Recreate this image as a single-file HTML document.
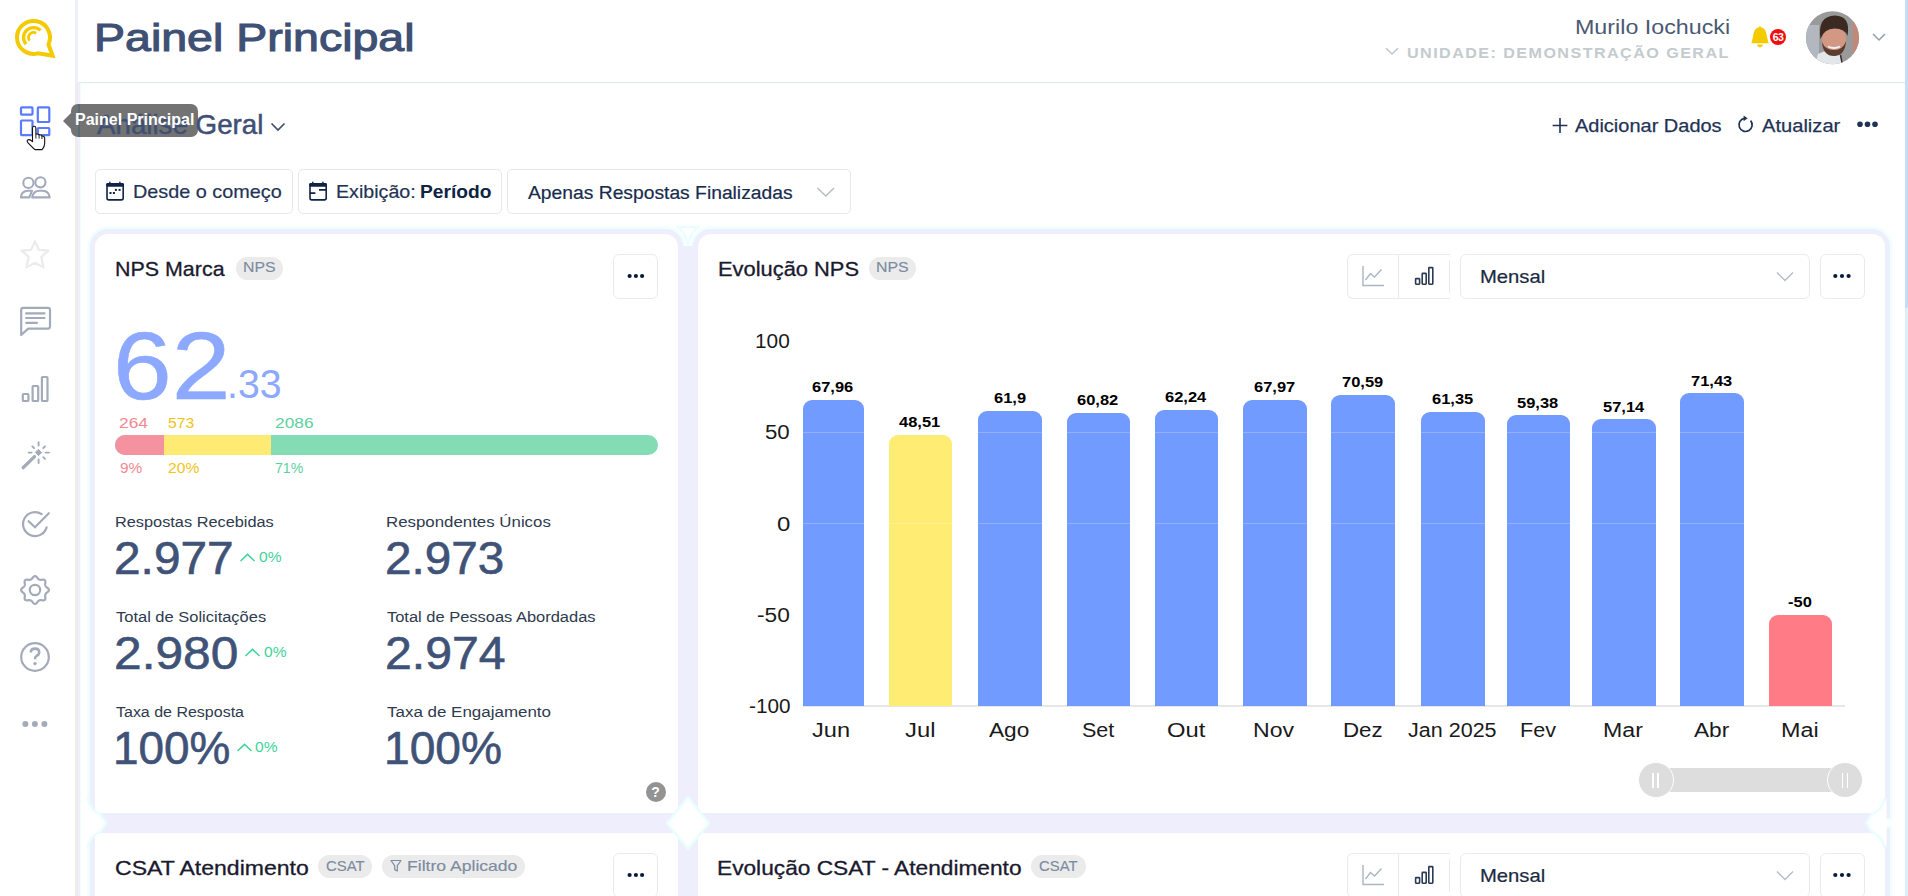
<!DOCTYPE html>
<html><head><meta charset="utf-8"><title>Painel Principal</title>
<style>
html,body{margin:0;padding:0;width:1908px;height:896px;overflow:hidden;background:#fff}
body{position:relative;font-family:"Liberation Sans",sans-serif}
.t{position:absolute;white-space:nowrap;line-height:1;transform-origin:0 0}
.r{position:absolute;box-sizing:border-box}
.s{position:absolute;overflow:visible}
</style></head><body>
<div class="r" style="left:1905px;top:0px;width:3px;height:896px;background:#DDEEF8"></div>
<div class="r" style="left:1905px;top:0px;width:3px;height:308px;background:#C4DCF6;border-radius:0 0 2px 2px"></div>
<div class="r" style="left:75px;top:0px;width:3px;height:83px;background:#EEEEFC"></div>
<div class="r" style="left:75px;top:83px;width:3px;height:813px;background:#EDEDED"></div>
<div class="r" style="left:78px;top:83px;width:2px;height:813px;background:#EEEEFC"></div>
<div class="r" style="left:80px;top:83px;width:1px;height:813px;background:#F0FEFE"></div>
<div class="r" style="left:78px;top:82px;width:1827px;height:1px;background:#E3EAEE"></div>
<div class="r" style="left:81px;top:83px;width:1824px;height:1px;background:#F2FEFE"></div>
<svg class="s" style="left:0px;top:0px" width="80" height="80" viewBox="0 0 80 80"><g fill="none" stroke="#F3CB00">
<path d="M37.8 53.4 A16.5 16.5 0 1 1 48.45 44.47 L52.6 55.8 Z" stroke-width="4" stroke-linejoin="miter" stroke-miterlimit="10"/>
<path d="M26.07 44.19 A10 10 0 0 1 40.57 30.43" stroke-width="3.3"/>
<path d="M29.67 40.71 A5 5 0 0 1 36.15 33.26" stroke-width="2.8"/>
</g></svg>
<svg class="s" style="left:18px;top:104px" width="34" height="34" viewBox="0 0 34 34"><g fill="none" stroke="#5B7BFF" stroke-width="2.2">
<rect x="3" y="3.4" width="11.5" height="7.2" rx="0.8"/>
<rect x="19.8" y="3.4" width="11.5" height="14.6" rx="0.8"/>
<rect x="3" y="16.5" width="11.5" height="14.6" rx="0.8"/>
<rect x="19.8" y="24" width="11.5" height="7.2" rx="0.8"/>
</g></svg>
<svg class="s" style="left:18px;top:174px" width="34" height="28" viewBox="0 0 34 28"><g fill="none" stroke="#A3ABBB" stroke-width="2.1" stroke-linejoin="round">
<circle cx="10.4" cy="8.9" r="5.1"/>
<circle cx="22.4" cy="8.3" r="5.1"/>
<path d="M2.9 23.4 Q3.4 17 10 16.8 H14 L11.4 23.4 Z"/>
<path d="M14.2 23.4 Q15.3 16.8 21.6 16.8 H24.6 Q30.9 17 31.7 23.4 Z"/>
</g></svg>
<svg class="s" style="left:18px;top:238px" width="34" height="34" viewBox="0 0 34 34"><path d="M17 3.2 L20.9 11.9 L30.4 12.6 L23.3 18.9 L25.6 29.4 L17 24.8 L8.4 29.4 L10.7 18.9 L3.6 12.6 L13.1 11.9 Z" fill="none" stroke="#EBEBEB" stroke-width="2.2" stroke-linejoin="round"/></svg>
<svg class="s" style="left:18px;top:304px" width="34" height="34" viewBox="0 0 34 34"><g fill="none" stroke="#A3ABBB" stroke-width="2.2" stroke-linejoin="round">
<path d="M3.2 31 V5.8 Q3.2 3.8 5.2 3.8 H30 Q32 3.8 32 5.8 V22.6 Q32 24.6 30 24.6 H10.2 Z"/>
<path d="M8.2 9.4 H26.5 M8.2 14 H26.5 M8.2 18.8 H19" stroke-linecap="round"/>
</g></svg>
<svg class="s" style="left:18px;top:372px" width="34" height="34" viewBox="0 0 34 34"><g fill="none" stroke="#A3ABBB" stroke-width="2.2">
<rect x="4.8" y="22" width="5.6" height="7" rx="0.8"/>
<rect x="14.6" y="14" width="5.6" height="15" rx="0.8"/>
<rect x="23.9" y="5" width="5.6" height="24" rx="0.8"/>
</g></svg>
<svg class="s" style="left:18px;top:438px" width="34" height="34" viewBox="0 0 34 34"><g fill="none" stroke="#A3ABBB" stroke-linecap="round">
<path d="M5.2 29.6 L16.5 18.6" stroke-width="3.4"/>
<path d="M20.6 11.6 L23.6 14.6 L20.6 17.6 L17.6 14.6 Z" fill="#A3ABBB" stroke-width="1"/>
<path d="M20.6 4.2 V7.6 M20.6 21.4 V25 M10.6 14.6 H13.6 M27.6 14.6 H31 M14.3 8.3 L16 10 M27 8.3 L25.3 10 M25.3 19.2 L27 20.9" stroke-width="1.9"/>
</g></svg>
<svg class="s" style="left:18px;top:506px" width="34" height="34" viewBox="0 0 34 34"><g fill="none" stroke="#A3ABBB" stroke-width="2.2" stroke-linecap="round">
<path d="M28.6 21.4 A12 12 0 1 1 23.7 8.1"/>
<path d="M10.6 15.2 L17 21.3 L30.8 7.2"/>
</g></svg>
<svg class="s" style="left:18px;top:573px" width="34" height="34" viewBox="0 0 34 34"><g fill="none" stroke="#A3ABBB" stroke-width="2.2" stroke-linejoin="round">
<path d="M30.90 17.00 L30.84 17.45 L30.65 17.89 L30.35 18.32 L29.98 18.71 L29.55 19.07 L29.12 19.41 L28.70 19.73 L28.33 20.04 L28.02 20.34 L27.77 20.66 L27.59 20.99 L27.44 21.32 L27.30 21.67 L27.20 22.03 L27.15 22.43 L27.16 22.86 L27.20 23.34 L27.27 23.86 L27.34 24.41 L27.38 24.97 L27.37 25.51 L27.28 26.02 L27.10 26.46 L26.83 26.83 L26.46 27.10 L26.02 27.28 L25.51 27.37 L24.97 27.38 L24.41 27.34 L23.86 27.27 L23.34 27.20 L22.86 27.16 L22.43 27.15 L22.03 27.20 L21.67 27.30 L21.32 27.44 L20.99 27.59 L20.66 27.77 L20.34 28.02 L20.04 28.33 L19.73 28.70 L19.41 29.12 L19.07 29.55 L18.71 29.98 L18.32 30.35 L17.89 30.65 L17.45 30.84 L17.00 30.90 L16.55 30.84 L16.11 30.65 L15.68 30.35 L15.29 29.98 L14.93 29.55 L14.59 29.12 L14.27 28.70 L13.96 28.33 L13.66 28.02 L13.34 27.77 L13.01 27.59 L12.68 27.44 L12.33 27.30 L11.97 27.20 L11.57 27.15 L11.14 27.16 L10.66 27.20 L10.14 27.27 L9.59 27.34 L9.03 27.38 L8.49 27.37 L7.98 27.28 L7.54 27.10 L7.17 26.83 L6.90 26.46 L6.72 26.02 L6.63 25.51 L6.62 24.97 L6.66 24.41 L6.73 23.86 L6.80 23.34 L6.84 22.86 L6.85 22.43 L6.80 22.03 L6.70 21.67 L6.56 21.32 L6.41 20.99 L6.23 20.66 L5.98 20.34 L5.67 20.04 L5.30 19.73 L4.88 19.41 L4.45 19.07 L4.02 18.71 L3.65 18.32 L3.35 17.89 L3.16 17.45 L3.10 17.00 L3.16 16.55 L3.35 16.11 L3.65 15.68 L4.02 15.29 L4.45 14.93 L4.88 14.59 L5.30 14.27 L5.67 13.96 L5.98 13.66 L6.23 13.34 L6.41 13.01 L6.56 12.68 L6.70 12.33 L6.80 11.97 L6.85 11.57 L6.84 11.14 L6.80 10.66 L6.73 10.14 L6.66 9.59 L6.62 9.03 L6.63 8.49 L6.72 7.98 L6.90 7.54 L7.17 7.17 L7.54 6.90 L7.98 6.72 L8.49 6.63 L9.03 6.62 L9.59 6.66 L10.14 6.73 L10.66 6.80 L11.14 6.84 L11.57 6.85 L11.97 6.80 L12.33 6.70 L12.68 6.56 L13.01 6.41 L13.34 6.23 L13.66 5.98 L13.96 5.67 L14.27 5.30 L14.59 4.88 L14.93 4.45 L15.29 4.02 L15.68 3.65 L16.11 3.35 L16.55 3.16 L17.00 3.10 L17.45 3.16 L17.89 3.35 L18.32 3.65 L18.71 4.02 L19.07 4.45 L19.41 4.88 L19.73 5.30 L20.04 5.67 L20.34 5.98 L20.66 6.23 L20.99 6.41 L21.32 6.56 L21.67 6.70 L22.03 6.80 L22.43 6.85 L22.86 6.84 L23.34 6.80 L23.86 6.73 L24.41 6.66 L24.97 6.62 L25.51 6.63 L26.02 6.72 L26.46 6.90 L26.83 7.17 L27.10 7.54 L27.28 7.98 L27.37 8.49 L27.38 9.03 L27.34 9.59 L27.27 10.14 L27.20 10.66 L27.16 11.14 L27.15 11.57 L27.20 11.97 L27.30 12.33 L27.44 12.68 L27.59 13.01 L27.77 13.34 L28.02 13.66 L28.33 13.96 L28.70 14.27 L29.12 14.59 L29.55 14.93 L29.98 15.29 L30.35 15.68 L30.65 16.11 L30.84 16.55 Z"/><circle cx="17" cy="17" r="5.2"/></g></svg>
<svg class="s" style="left:18px;top:640px" width="34" height="34" viewBox="0 0 34 34"><g fill="none" stroke="#A3ABBB" stroke-width="2.2">
<circle cx="17" cy="17" r="13.8"/>
<path d="M12.8 12.6 Q12.8 8.6 17 8.6 Q21.2 8.6 21.2 12.2 Q21.2 14.6 18.6 15.8 Q17 16.6 17 19.2" stroke-width="2.6"/>
</g><circle cx="17" cy="23.6" r="1.7" fill="#A3ABBB"/></svg>
<svg class="s" style="left:18px;top:715px" width="34" height="18" viewBox="0 0 34 18"><g fill="#A3ABBB"><circle cx="7.4" cy="9" r="3"/><circle cx="16.9" cy="9" r="3"/><circle cx="26.4" cy="9" r="3"/></g></svg>
<div class="t" style="left:93.78px;top:19.32px;font-size:38.55px;color:#3F5075;transform:scaleX(1.2064);-webkit-text-stroke:1.1px #3F5075;">Painel Principal</div>
<div class="t" style="left:1575.14px;top:16.67px;font-size:20.87px;color:#4A5A73;transform:scaleX(1.1149);">Murilo Iochucki</div>
<div class="t" style="left:1407.03px;top:44.67px;font-size:15.51px;font-weight:700;color:#C3CBCE;letter-spacing:1.385px;transform:scaleX(1.04);">UNIDADE: DEMONSTRAÇÃO GERAL</div>
<svg class="s" style="left:1384px;top:44px" width="16" height="14" viewBox="0 0 16 14"><path d="M2 4.2 L8 10 L14 4.2" fill="none" stroke="#BCC5C9" stroke-width="1.5"/></svg>
<svg class="s" style="left:1749px;top:25px" width="22" height="24" viewBox="0 0 22 24"><path d="M11 2.2 C15.8 2.6 17.4 6.2 17.7 10.6 L19.6 18.2 H2.4 L4.3 10.6 C4.6 6.2 6.2 2.6 11 2.2 Z" fill="#F4CB00"/><circle cx="11" cy="2.6" r="1.2" fill="#F4CB00"/>
<path d="M8.2 19.4 H13.8 Q13.5 22.2 11 22.2 Q8.5 22.2 8.2 19.4 Z" fill="#F4CB00"/></svg>
<div class="r" style="left:1770px;top:29px;width:16px;height:16px;border-radius:50%;background:#F00F0F;color:#fff;font-size:10.5px;line-height:16px;text-align:center;font-weight:700;letter-spacing:-0.6px">63</div>
<svg class="s" style="left:1806px;top:11px" width="54" height="54" viewBox="0 0 54 54"><defs><clipPath id="av"><circle cx="26.5" cy="26.7" r="26.5"/></clipPath></defs>
<g clip-path="url(#av)">
<rect width="54" height="54" fill="#9A9A9A"/>
<rect x="0" y="14" width="13" height="34" fill="#B2B7C0"/>
<rect x="47" y="8" width="8" height="46" fill="#C48877"/>
<path d="M9 54 L12 43 Q20 38 28 40 Q36 42 37 54 Z" fill="#E3E7EA"/>
<path d="M34.5 44 L36.5 54" stroke="#3A3030" stroke-width="1.6"/>
<ellipse cx="28" cy="29" rx="12" ry="14" fill="#D39883"/>
<path d="M14.5 28 Q11 5 29 4.5 Q45 5 41.5 25 Q39 17.5 28.5 17.5 Q18 17.5 14.5 28 Z" fill="#3B2A22"/>
<path d="M16 31 Q17 45 28 45 Q39 45 40 30 Q37 39 28 39 Q19 39 16 31 Z" fill="#5B3C30"/>
<path d="M22 35.5 Q28 38.5 34 35.5" stroke="#F2F2F2" stroke-width="1.8" fill="none"/>
</g></svg>
<svg class="s" style="left:1870px;top:30px" width="18" height="14" viewBox="0 0 18 14"><path d="M3 4 L9 10 L15 4" fill="none" stroke="#8FA0AC" stroke-width="1.5"/></svg>
<div class="r" style="left:71px;top:104px;width:127px;height:33px;border-radius:7px;background:#737373"></div>
<div class="r" style="left:63px;top:113px;width:0;height:0;border-top:8px solid transparent;border-bottom:8px solid transparent;border-right:8px solid #737373"></div>
<div class="r" style="left:78px;top:104px;width:2px;height:33px;background:#566C78"></div>
<div class="t" style="left:96.50px;top:110.87px;font-size:27.54px;color:#3F5075;transform:scaleX(1.0066);-webkit-text-stroke:0.5px #3F5075;">Análise Geral</div>
<svg class="s" style="left:268px;top:118px" width="20" height="16" viewBox="0 0 20 16"><path d="M3.5 5.5 L10 12 L16.5 5.5" fill="none" stroke="#3F5075" stroke-width="1.7"/></svg>
<div class="t" style="left:74.96px;top:111.61px;font-size:15.94px;font-weight:700;color:#FFFFFF;transform:scaleX(1.0059);">Painel Principal</div>
<svg class="s" style="left:24px;top:118px" width="22" height="36" viewBox="0 0 22 36"><path d="M8.5 10.2 Q8.5 8.3 10.2 8.3 Q11.9 8.3 11.9 10.2 V16.3 Q13.9 15.4 15.1 16.9 Q17.1 16.5 17.9 18.1 Q20.1 17.8 20.7 20 V25 Q20.7 29 18.1 31.6 H11 Q8.6 29.6 3.6 24.3 Q2.5 22.5 4.2 21.7 Q5.9 21.1 8.5 23.6 Z" fill="#fff" stroke="#111" stroke-width="1.1" stroke-linejoin="round"/>
<path d="M11.9 16.3 V20.6 M15.1 16.9 V20.6 M17.9 18.1 V21" stroke="#111" stroke-width="0.9"/></svg>
<svg class="s" style="left:1550px;top:116px" width="20" height="20" viewBox="0 0 20 20"><path d="M10 2 V17 M2.6 9.5 H17.4" stroke="#1F3356" stroke-width="1.6" fill="none"/></svg>
<div class="t" style="left:1575.00px;top:116.98px;font-size:18.12px;color:#1F3356;transform:scaleX(1.1032);-webkit-text-stroke:0.25px #1F3356;">Adicionar Dados</div>
<svg class="s" style="left:1736px;top:113px" width="20" height="22" viewBox="0 0 20 22"><path d="M14.6 7.6 A6.6 6.6 0 1 1 8.3 5.4" fill="none" stroke="#1F3356" stroke-width="1.7"/><path d="M7.6 2.4 L11.6 5.2 L7.6 8.2 Z" fill="#1F3356"/></svg>
<div class="t" style="left:1762.00px;top:116.98px;font-size:18.12px;color:#1F3356;transform:scaleX(1.1111);-webkit-text-stroke:0.25px #1F3356;">Atualizar</div>
<svg class="s" style="left:1854px;top:117px" width="26" height="14" viewBox="0 0 26 14"><g fill="#1F3356"><circle cx="6" cy="7.3" r="2.8"/><circle cx="13.5" cy="7.3" r="2.8"/><circle cx="21" cy="7.3" r="2.8"/></g></svg>
<div class="r" style="left:95px;top:169px;width:198px;height:45px;background:#fff;border:1px solid #E5E8EC;border-radius:5px;box-sizing:border-box"></div>
<div class="r" style="left:298px;top:169px;width:204px;height:45px;background:#fff;border:1px solid #E5E8EC;border-radius:5px;box-sizing:border-box"></div>
<div class="r" style="left:507px;top:169px;width:344px;height:45px;background:#fff;border:1px solid #E5E8EC;border-radius:5px;box-sizing:border-box"></div>
<svg class="s" style="left:100px;top:175px" width="35" height="30" viewBox="0 0 35 30"><g fill="#0F2345"><rect x="7" y="8.7" width="16.2" height="16.2" rx="1.8" fill="none" stroke="#0F2345" stroke-width="1.6"/>
<rect x="6.2" y="7.9" width="17.7" height="3.9" rx="1.4"/><rect x="9.1" y="6.7" width="1.4" height="1.6"/><rect x="19.2" y="6.7" width="1.4" height="1.6"/></g><g fill="#0F2345"><rect x="14.9" y="13.9" width="2" height="2"/><rect x="18.6" y="13.9" width="2" height="2"/><rect x="9.5" y="17" width="2" height="2"/><rect x="12.9" y="17" width="2" height="2"/></g></svg>
<svg class="s" style="left:303px;top:175px" width="35" height="30" viewBox="0 0 35 30"><g fill="#0F2345"><rect x="7" y="8.7" width="16.2" height="16.2" rx="1.8" fill="none" stroke="#0F2345" stroke-width="1.6"/>
<rect x="6.2" y="7.9" width="17.7" height="3.9" rx="1.4"/><rect x="9.1" y="6.7" width="1.4" height="1.6"/><rect x="19.2" y="6.7" width="1.4" height="1.6"/></g><path d="M16 14.9 H23.2 M6.9 18.1 H12.4" stroke="#0F2345" stroke-width="1.7"/></svg>
<div class="t" style="left:133.41px;top:182.43px;font-size:19.13px;color:#1F3356;transform:scaleX(1.0370);-webkit-text-stroke:0.2px #1F3356;">Desde o começo</div>
<div class="t" style="left:336.03px;top:182.43px;font-size:19.13px;color:#1F3356;transform:scaleX(1.0280);-webkit-text-stroke:0.2px #1F3356;">Exibição:</div>
<div class="t" style="left:419.75px;top:182.43px;font-size:19.13px;font-weight:700;color:#0F2345;transform:scaleX(1.0035);">Período</div>
<div class="t" style="left:528.30px;top:182.53px;font-size:19.13px;color:#172B4D;transform:scaleX(1.0084);-webkit-text-stroke:0.2px #172B4D;">Apenas Respostas Finalizadas</div>
<svg class="s" style="left:815px;top:185px" width="22" height="14" viewBox="0 0 22 14"><path d="M2.5 3 L10.8 11 L19 3" fill="none" stroke="#B4BCC4" stroke-width="1.4"/></svg>
<div class="r" style="left:95px;top:234px;width:583px;height:579px;box-shadow:0 0 0 5px #EEEEFC,0 0 0 7.5px #EFFEFE;background:#fff;border-radius:13px 13px 0 0"></div>
<div class="r" style="left:698px;top:234px;width:1187px;height:579px;box-shadow:0 0 0 5px #EEEEFC,0 0 0 7.5px #EFFEFE;background:#fff;border-radius:13px 13px 0 0"></div>
<div class="r" style="left:95px;top:833px;width:583px;height:120px;box-shadow:0 0 0 5px #EEEEFC,0 0 0 7.5px #EFFEFE;background:#fff;"></div>
<div class="r" style="left:698px;top:833px;width:1187px;height:120px;box-shadow:0 0 0 5px #EEEEFC,0 0 0 7.5px #EFFEFE;background:#fff;"></div>
<div class="r" style="left:678px;top:246px;width:20px;height:650px;background:#EEEEFC"></div>
<div class="r" style="left:95px;top:813px;width:1790px;height:20px;background:#EEEEFC"></div>
<svg class="s" style="left:650px;top:780px" width="76" height="86" viewBox="0 0 76 86"><path d="M38 17 L59 43 L38 69 L17 43 Z" fill="#fff" stroke="#EAFEFE" stroke-width="2.6" stroke-linejoin="round"/></svg>
<svg class="s" style="left:650px;top:215px" width="76" height="40" viewBox="0 0 76 40"><path d="M27 12 Q35 16 38 30 Q41 16 49 12 Z" fill="#fff" stroke="#EAFEFE" stroke-width="2.4" stroke-linejoin="round"/></svg>
<svg class="s" style="left:80px;top:790px" width="30" height="66" viewBox="0 0 30 66"><path d="M5.5 8 Q9 21 19.5 23.5 L26 33 L19.5 42.5 Q9 45 5.5 58 Z" fill="#fff"/><path d="M7.5 8 Q10.5 21 19.5 23.5 L26 33 L19.5 42.5 Q10.5 45 7.5 58" fill="none" stroke="#EAFEFE" stroke-width="2.4" stroke-linejoin="round"/></svg>
<svg class="s" style="left:1862px;top:790px" width="30" height="66" viewBox="0 0 30 66"><path d="M24.5 8 Q21 21 10.5 23.5 L4 33 L10.5 42.5 Q21 45 24.5 58 Z" fill="#fff"/><path d="M22.5 8 Q19.5 21 10.5 23.5 L4 33 L10.5 42.5 Q19.5 45 22.5 58" fill="none" stroke="#EAFEFE" stroke-width="2.4" stroke-linejoin="round"/></svg>
<div class="t" style="left:115.08px;top:258.98px;font-size:20.14px;color:#1A1A2E;transform:scaleX(1.0648);-webkit-text-stroke:0.3px #1A1A2E;">NPS Marca</div>
<div class="r" style="left:236px;top:257px;width:47px;height:23px;background:#EBEBEB;border-radius:12px"></div>
<div class="t" style="left:243.43px;top:260.38px;font-size:14.78px;color:#7C8CA0;transform:scaleX(1.0725);-webkit-text-stroke:0.15px #7C8CA0;">NPS</div>
<div class="r" style="left:613px;top:254px;width:45px;height:45px;background:#fff;border:1px solid #EBEBEB;border-radius:6px;box-sizing:border-box"></div>
<svg class="s" style="left:613px;top:254px" width="45" height="45" viewBox="0 0 45 45"><g fill="#0A1A3A"><circle cx="16.6" cy="22" r="2.1"/><circle cx="22.9" cy="22" r="2.1"/><circle cx="29.1" cy="22" r="2.1"/></g></svg>
<div class="t" style="left:113.41px;top:317.70px;font-size:95.71px;color:#8CA8FF;transform:scaleX(1.1048);-webkit-text-stroke:0.6px #8CA8FF;">62</div>
<div class="t" style="left:227.46px;top:364.40px;font-size:40.00px;color:#8CA8FF;transform:scaleX(0.9821);">.33</div>
<div class="t" style="left:119.33px;top:415.40px;font-size:15.00px;color:#F2888F;transform:scaleX(1.1567);">264</div>
<div class="t" style="left:168.37px;top:415.40px;font-size:15.00px;color:#F2C415;transform:scaleX(1.0515);">573</div>
<div class="t" style="left:274.93px;top:415.40px;font-size:15.00px;color:#5ECFA0;transform:scaleX(1.1553);">2086</div>
<div class="r" style="left:115px;top:435px;width:543px;height:20px;background:#84DCB4;border-radius:10px;overflow:hidden"></div>
<div class="r" style="left:115px;top:435px;width:50px;height:20px;background:#F4939F;border-radius:10px 0 0 10px"></div>
<div class="r" style="left:164px;top:435px;width:107px;height:20px;background:#FFEB73"></div>
<div class="t" style="left:119.51px;top:460.90px;font-size:14.29px;color:#F2888F;transform:scaleX(1.0769);">9%</div>
<div class="t" style="left:168.22px;top:460.90px;font-size:14.29px;color:#F2C415;transform:scaleX(1.0966);">20%</div>
<div class="t" style="left:275.10px;top:460.90px;font-size:14.29px;color:#5ECFA0;transform:scaleX(0.9869);">71%</div>
<div class="t" style="left:114.69px;top:513.97px;font-size:15.51px;color:#2E3A4E;transform:scaleX(1.0530);">Respostas Recebidas</div>
<div class="t" style="left:385.65px;top:513.97px;font-size:15.51px;color:#2E3A4E;transform:scaleX(1.0870);">Respondentes Únicos</div>
<div class="t" style="left:115.67px;top:608.97px;font-size:15.51px;color:#2E3A4E;transform:scaleX(1.0627);">Total de Solicitações</div>
<div class="t" style="left:386.67px;top:608.97px;font-size:15.51px;color:#2E3A4E;transform:scaleX(1.0613);">Total de Pessoas Abordadas</div>
<div class="t" style="left:115.68px;top:703.97px;font-size:15.51px;color:#2E3A4E;transform:scaleX(1.0313);">Taxa de Resposta</div>
<div class="t" style="left:386.66px;top:703.97px;font-size:15.51px;color:#2E3A4E;transform:scaleX(1.0938);">Taxa de Engajamento</div>
<div class="t" style="left:113.61px;top:535.74px;font-size:45.43px;color:#3F5277;transform:scaleX(1.0529);-webkit-text-stroke:0.6px #3F5277;">2.977</div>
<div class="t" style="left:384.62px;top:535.74px;font-size:45.43px;color:#3F5277;transform:scaleX(1.0486);-webkit-text-stroke:0.6px #3F5277;">2.973</div>
<div class="t" style="left:113.52px;top:630.74px;font-size:45.43px;color:#3F5277;transform:scaleX(1.0938);-webkit-text-stroke:0.6px #3F5277;">2.980</div>
<div class="t" style="left:384.59px;top:630.74px;font-size:45.43px;color:#3F5277;transform:scaleX(1.0615);-webkit-text-stroke:0.6px #3F5277;">2.974</div>
<div class="t" style="left:112.56px;top:725.74px;font-size:45.43px;color:#3F5277;transform:scaleX(1.0108);-webkit-text-stroke:0.6px #3F5277;">100%</div>
<div class="t" style="left:383.54px;top:725.74px;font-size:45.43px;color:#3F5277;transform:scaleX(1.0153);-webkit-text-stroke:0.6px #3F5277;">100%</div>
<svg class="s" style="left:239px;top:552px" width="18" height="12" viewBox="0 0 18 12"><path d="M1.5 9 L8.5 2.4 L15.5 9" fill="none" stroke="#3FD39B" stroke-width="1.5"/></svg>
<div class="t" style="left:259.08px;top:550.42px;font-size:14.86px;color:#3FD39B;transform:scaleX(1.0465);">0%</div>
<svg class="s" style="left:244px;top:647px" width="18" height="12" viewBox="0 0 18 12"><path d="M1.5 9 L8.5 2.4 L15.5 9" fill="none" stroke="#3FD39B" stroke-width="1.5"/></svg>
<div class="t" style="left:263.98px;top:645.42px;font-size:14.86px;color:#3FD39B;transform:scaleX(1.0465);">0%</div>
<svg class="s" style="left:236px;top:742px" width="18" height="12" viewBox="0 0 18 12"><path d="M1.5 9 L8.5 2.4 L15.5 9" fill="none" stroke="#3FD39B" stroke-width="1.5"/></svg>
<div class="t" style="left:255.18px;top:740.42px;font-size:14.86px;color:#3FD39B;transform:scaleX(1.0465);">0%</div>
<div class="r" style="left:645.5px;top:781.8px;width:20.2px;height:20.2px;border-radius:50%;background:#939393;color:#fff;font-size:14px;font-weight:700;line-height:20px;text-align:center">?</div>
<div class="t" style="left:718.25px;top:259.00px;font-size:20.00px;color:#1A1A2E;transform:scaleX(1.0934);-webkit-text-stroke:0.3px #1A1A2E;">Evolução NPS</div>
<div class="r" style="left:869px;top:257px;width:47px;height:23px;background:#EBEBEB;border-radius:12px"></div>
<div class="t" style="left:876.33px;top:260.38px;font-size:14.78px;color:#7C8CA0;transform:scaleX(1.0725);-webkit-text-stroke:0.15px #7C8CA0;">NPS</div>
<div class="r" style="left:1347px;top:254px;width:103px;height:45px;border:1px solid #EBEBEB;border-radius:6px 0 0 6px;box-sizing:border-box;border-right:none"></div>
<div class="r" style="left:1398px;top:254px;width:1px;height:45px;background:#EBEBEB"></div>
<div class="r" style="left:1449px;top:260px;width:1px;height:33px;background:#EBEBEB"></div>
<svg class="s" style="left:1360px;top:264px" width="26" height="24" viewBox="0 0 26 24"><path d="M3 2 V21.5 H24" fill="none" stroke="#A9B6C4" stroke-width="1.4"/><path d="M5.5 16 L10.5 9.5 L14.5 13 L21.5 5.5" fill="none" stroke="#A9B6C4" stroke-width="1.4"/></svg>
<svg class="s" style="left:1412px;top:264px" width="24" height="24" viewBox="0 0 24 24"><g fill="none" stroke="#2A3A55" stroke-width="1.6"><rect x="3.6" y="14.6" width="4" height="5.6" rx="0.6"/><rect x="10.2" y="9.4" width="4" height="10.8" rx="0.6"/><rect x="16.8" y="3.6" width="4" height="16.6" rx="0.6"/></g></svg>
<div class="r" style="left:1460px;top:254px;width:350px;height:45px;border:1px solid #EBEBEB;border-radius:6px;box-sizing:border-box"></div>
<div class="t" style="left:1479.88px;top:267.13px;font-size:19.13px;color:#1A2A40;transform:scaleX(1.0591);-webkit-text-stroke:0.2px #1A2A40;">Mensal</div>
<svg class="s" style="left:1774px;top:268px" width="22" height="16" viewBox="0 0 22 16"><path d="M3 4.5 L11 12.5 L19 4.5" fill="none" stroke="#B4BCC4" stroke-width="1.4"/></svg>
<div class="r" style="left:1820px;top:254px;width:45px;height:45px;background:#fff;border:1px solid #EBEBEB;border-radius:6px;box-sizing:border-box"></div>
<svg class="s" style="left:1820px;top:254px" width="45" height="45" viewBox="0 0 45 45"><g fill="#0A1A3A"><circle cx="15.3" cy="22" r="2.1"/><circle cx="22" cy="22" r="2.1"/><circle cx="28.6" cy="22" r="2.1"/></g></svg>
<div class="t" style="left:755.34px;top:331.20px;font-size:20.00px;color:#1A1A1A;transform:scaleX(1.0418);">100</div>
<div class="t" style="left:765.41px;top:422.45px;font-size:20.00px;color:#1A1A1A;transform:scaleX(1.1111);">50</div>
<div class="t" style="left:776.84px;top:513.70px;font-size:20.00px;color:#1A1A1A;transform:scaleX(1.1979);">0</div>
<div class="t" style="left:757.28px;top:604.71px;font-size:20.29px;color:#1A1A1A;transform:scaleX(1.1193);">-50</div>
<div class="t" style="left:748.57px;top:695.96px;font-size:20.29px;color:#1A1A1A;transform:scaleX(1.0217);">-100</div>
<div class="r" style="left:803px;top:705px;width:1042px;height:1.5px;background:#E6E6E6"></div>
<div class="r" style="left:802.7px;top:399.5px;width:60.9px;height:306.5px;background:#729BFF;border-radius:9px 9px 0 0"></div>
<div class="t" style="left:812.05px;top:379.91px;font-size:14.71px;font-weight:700;color:#000;transform:scaleX(1.1200);">67,96</div>
<div class="t" style="left:812.35px;top:719.81px;font-size:20.58px;color:#1A1A1A;transform:scaleX(1.1465);">Jun</div>
<div class="r" style="left:888.5px;top:435.0px;width:63.4px;height:271.0px;background:#FFEC73;border-radius:9px 9px 0 0"></div>
<div class="t" style="left:899.18px;top:415.41px;font-size:14.71px;font-weight:700;color:#000;transform:scaleX(1.1200);">48,51</div>
<div class="t" style="left:904.54px;top:719.81px;font-size:20.58px;color:#1A1A1A;transform:scaleX(1.1589);">Jul</div>
<div class="r" style="left:978.2px;top:410.5px;width:63.7px;height:295.5px;background:#729BFF;border-radius:9px 9px 0 0"></div>
<div class="t" style="left:993.52px;top:390.97px;font-size:14.71px;font-weight:700;color:#000;transform:scaleX(1.1200);">61,9</div>
<div class="t" style="left:989.20px;top:719.81px;font-size:20.58px;color:#1A1A1A;transform:scaleX(1.1003);">Ago</div>
<div class="r" style="left:1066.8px;top:412.5px;width:62.9px;height:293.5px;background:#729BFF;border-radius:9px 9px 0 0"></div>
<div class="t" style="left:1077.19px;top:392.94px;font-size:14.71px;font-weight:700;color:#000;transform:scaleX(1.1200);">60,82</div>
<div class="t" style="left:1081.53px;top:719.81px;font-size:20.58px;color:#1A1A1A;transform:scaleX(1.0456);">Set</div>
<div class="r" style="left:1155.1px;top:409.9px;width:63.1px;height:296.1px;background:#729BFF;border-radius:9px 9px 0 0"></div>
<div class="t" style="left:1165.30px;top:390.35px;font-size:14.71px;font-weight:700;color:#000;transform:scaleX(1.1200);">62,24</div>
<div class="t" style="left:1166.53px;top:719.81px;font-size:20.58px;color:#1A1A1A;transform:scaleX(1.1556);">Out</div>
<div class="r" style="left:1243.4px;top:399.5px;width:63.4px;height:306.5px;background:#729BFF;border-radius:9px 9px 0 0"></div>
<div class="t" style="left:1254.04px;top:379.89px;font-size:14.71px;font-weight:700;color:#000;transform:scaleX(1.1200);">67,97</div>
<div class="t" style="left:1252.95px;top:719.81px;font-size:20.58px;color:#1A1A1A;transform:scaleX(1.1209);">Nov</div>
<div class="r" style="left:1331.3px;top:394.7px;width:63.7px;height:311.3px;background:#729BFF;border-radius:9px 9px 0 0"></div>
<div class="t" style="left:1342.01px;top:375.11px;font-size:14.71px;font-weight:700;color:#000;transform:scaleX(1.1200);">70,59</div>
<div class="t" style="left:1343.02px;top:719.81px;font-size:20.58px;color:#1A1A1A;transform:scaleX(1.0837);">Dez</div>
<div class="r" style="left:1421.3px;top:411.5px;width:63.4px;height:294.5px;background:#729BFF;border-radius:9px 9px 0 0"></div>
<div class="t" style="left:1431.82px;top:391.98px;font-size:14.71px;font-weight:700;color:#000;transform:scaleX(1.1200);">61,35</div>
<div class="t" style="left:1407.68px;top:719.81px;font-size:20.58px;color:#1A1A1A;transform:scaleX(1.0460);">Jan 2025</div>
<div class="r" style="left:1506.8px;top:415.1px;width:63.4px;height:290.9px;background:#729BFF;border-radius:9px 9px 0 0"></div>
<div class="t" style="left:1517.40px;top:395.57px;font-size:14.71px;font-weight:700;color:#000;transform:scaleX(1.1200);">59,38</div>
<div class="t" style="left:1519.57px;top:719.81px;font-size:20.58px;color:#1A1A1A;transform:scaleX(1.0487);">Fev</div>
<div class="r" style="left:1592.3px;top:419.2px;width:63.7px;height:286.8px;background:#729BFF;border-radius:9px 9px 0 0"></div>
<div class="t" style="left:1602.84px;top:399.66px;font-size:14.71px;font-weight:700;color:#000;transform:scaleX(1.1200);">57,14</div>
<div class="t" style="left:1602.85px;top:719.81px;font-size:20.58px;color:#1A1A1A;transform:scaleX(1.1243);">Mar</div>
<div class="r" style="left:1680.3px;top:393.1px;width:63.7px;height:312.9px;background:#729BFF;border-radius:9px 9px 0 0"></div>
<div class="t" style="left:1691.01px;top:373.58px;font-size:14.71px;font-weight:700;color:#000;transform:scaleX(1.1200);">71,43</div>
<div class="t" style="left:1693.90px;top:719.81px;font-size:20.58px;color:#1A1A1A;transform:scaleX(1.1012);">Abr</div>
<div class="r" style="left:1768.6px;top:614.8px;width:63.7px;height:91.2px;background:#FF7B86;border-radius:9px 9px 0 0"></div>
<div class="t" style="left:1788.04px;top:595.01px;font-size:14.93px;font-weight:700;color:#000;transform:scaleX(1.1040);">-50</div>
<div class="t" style="left:1780.83px;top:719.81px;font-size:20.58px;color:#1A1A1A;transform:scaleX(1.1344);">Mai</div>
<div class="r" style="left:803px;top:432px;width:1040px;height:1px;background:rgba(255,255,255,0.22)"></div>
<div class="r" style="left:803px;top:523px;width:1040px;height:1px;background:rgba(255,255,255,0.22)"></div>
<div class="r" style="left:1656px;top:768px;width:190px;height:24px;background:#DDDDDD"></div>
<div class="r" style="left:1637.8px;top:762.2px;width:36px;height:36px;border-radius:50%;background:#DDDDDD;box-sizing:border-box;border:1.5px solid #fff"></div>
<div class="r" style="left:1652.2px;top:772.6px;width:1.6px;height:15px;background:#fff"></div>
<div class="r" style="left:1657.2px;top:772.6px;width:1.6px;height:15px;background:#fff"></div>
<div class="r" style="left:1827.3px;top:762.2px;width:36px;height:36px;border-radius:50%;background:#DDDDDD;box-sizing:border-box;border:1.5px solid #fff"></div>
<div class="r" style="left:1841.7px;top:772.6px;width:1.6px;height:15px;background:#fff"></div>
<div class="r" style="left:1846.7px;top:772.6px;width:1.6px;height:15px;background:#fff"></div>
<div class="t" style="left:114.55px;top:858.08px;font-size:20.14px;color:#1A1A2E;transform:scaleX(1.1449);-webkit-text-stroke:0.3px #1A1A2E;">CSAT Atendimento</div>
<div class="r" style="left:318px;top:855px;width:54px;height:23px;background:#EBEBEB;border-radius:12px"></div>
<div class="t" style="left:325.76px;top:859.38px;font-size:14.78px;color:#7C8CA0;transform:scaleX(1.0067);-webkit-text-stroke:0.15px #7C8CA0;">CSAT</div>
<div class="r" style="left:382px;top:855px;width:143px;height:23px;background:#EBEBEB;border-radius:12px"></div>
<svg class="s" style="left:389px;top:858px" width="14" height="16" viewBox="0 0 14 16"><path d="M2 2.5 H12 L8.3 7.6 V13 L5.7 11.6 V7.6 Z" fill="none" stroke="#7C8CA0" stroke-width="1.2" stroke-linejoin="round"/></svg>
<div class="t" style="left:407.19px;top:859.38px;font-size:14.78px;color:#7C8CA0;transform:scaleX(1.1904);-webkit-text-stroke:0.15px #7C8CA0;">Filtro Aplicado</div>
<div class="r" style="left:613px;top:853px;width:45px;height:45px;background:#fff;border:1px solid #EBEBEB;border-radius:6px;box-sizing:border-box"></div>
<svg class="s" style="left:613px;top:853px" width="45" height="45" viewBox="0 0 45 45"><g fill="#0A1A3A"><circle cx="16.6" cy="22" r="2.1"/><circle cx="22.9" cy="22" r="2.1"/><circle cx="29.1" cy="22" r="2.1"/></g></svg>
<div class="t" style="left:716.98px;top:858.08px;font-size:20.14px;color:#1A1A2E;transform:scaleX(1.1280);-webkit-text-stroke:0.3px #1A1A2E;">Evolução CSAT - Atendimento</div>
<div class="r" style="left:1031px;top:855px;width:55px;height:23px;background:#EBEBEB;border-radius:12px"></div>
<div class="t" style="left:1039.26px;top:859.38px;font-size:14.78px;color:#7C8CA0;transform:scaleX(1.0067);-webkit-text-stroke:0.15px #7C8CA0;">CSAT</div>
<div class="r" style="left:1347px;top:853px;width:103px;height:45px;border:1px solid #EBEBEB;border-radius:6px 0 0 6px;box-sizing:border-box;border-right:none"></div>
<div class="r" style="left:1398px;top:853px;width:1px;height:45px;background:#EBEBEB"></div>
<div class="r" style="left:1449px;top:859px;width:1px;height:33px;background:#EBEBEB"></div>
<svg class="s" style="left:1360px;top:863px" width="26" height="24" viewBox="0 0 26 24"><path d="M3 2 V21.5 H24" fill="none" stroke="#A9B6C4" stroke-width="1.4"/><path d="M5.5 16 L10.5 9.5 L14.5 13 L21.5 5.5" fill="none" stroke="#A9B6C4" stroke-width="1.4"/></svg>
<svg class="s" style="left:1412px;top:863px" width="24" height="24" viewBox="0 0 24 24"><g fill="none" stroke="#2A3A55" stroke-width="1.6"><rect x="3.6" y="14.6" width="4" height="5.6" rx="0.6"/><rect x="10.2" y="9.4" width="4" height="10.8" rx="0.6"/><rect x="16.8" y="3.6" width="4" height="16.6" rx="0.6"/></g></svg>
<div class="r" style="left:1460px;top:853px;width:350px;height:45px;border:1px solid #EBEBEB;border-radius:6px;box-sizing:border-box"></div>
<div class="t" style="left:1479.88px;top:866.13px;font-size:19.13px;color:#1A2A40;transform:scaleX(1.0591);-webkit-text-stroke:0.2px #1A2A40;">Mensal</div>
<svg class="s" style="left:1774px;top:867px" width="22" height="16" viewBox="0 0 22 16"><path d="M3 4.5 L11 12.5 L19 4.5" fill="none" stroke="#B4BCC4" stroke-width="1.4"/></svg>
<div class="r" style="left:1820px;top:853px;width:45px;height:45px;background:#fff;border:1px solid #EBEBEB;border-radius:6px;box-sizing:border-box"></div>
<svg class="s" style="left:1820px;top:853px" width="45" height="45" viewBox="0 0 45 45"><g fill="#0A1A3A"><circle cx="15.3" cy="22" r="2.1"/><circle cx="22" cy="22" r="2.1"/><circle cx="28.6" cy="22" r="2.1"/></g></svg>
</body></html>
